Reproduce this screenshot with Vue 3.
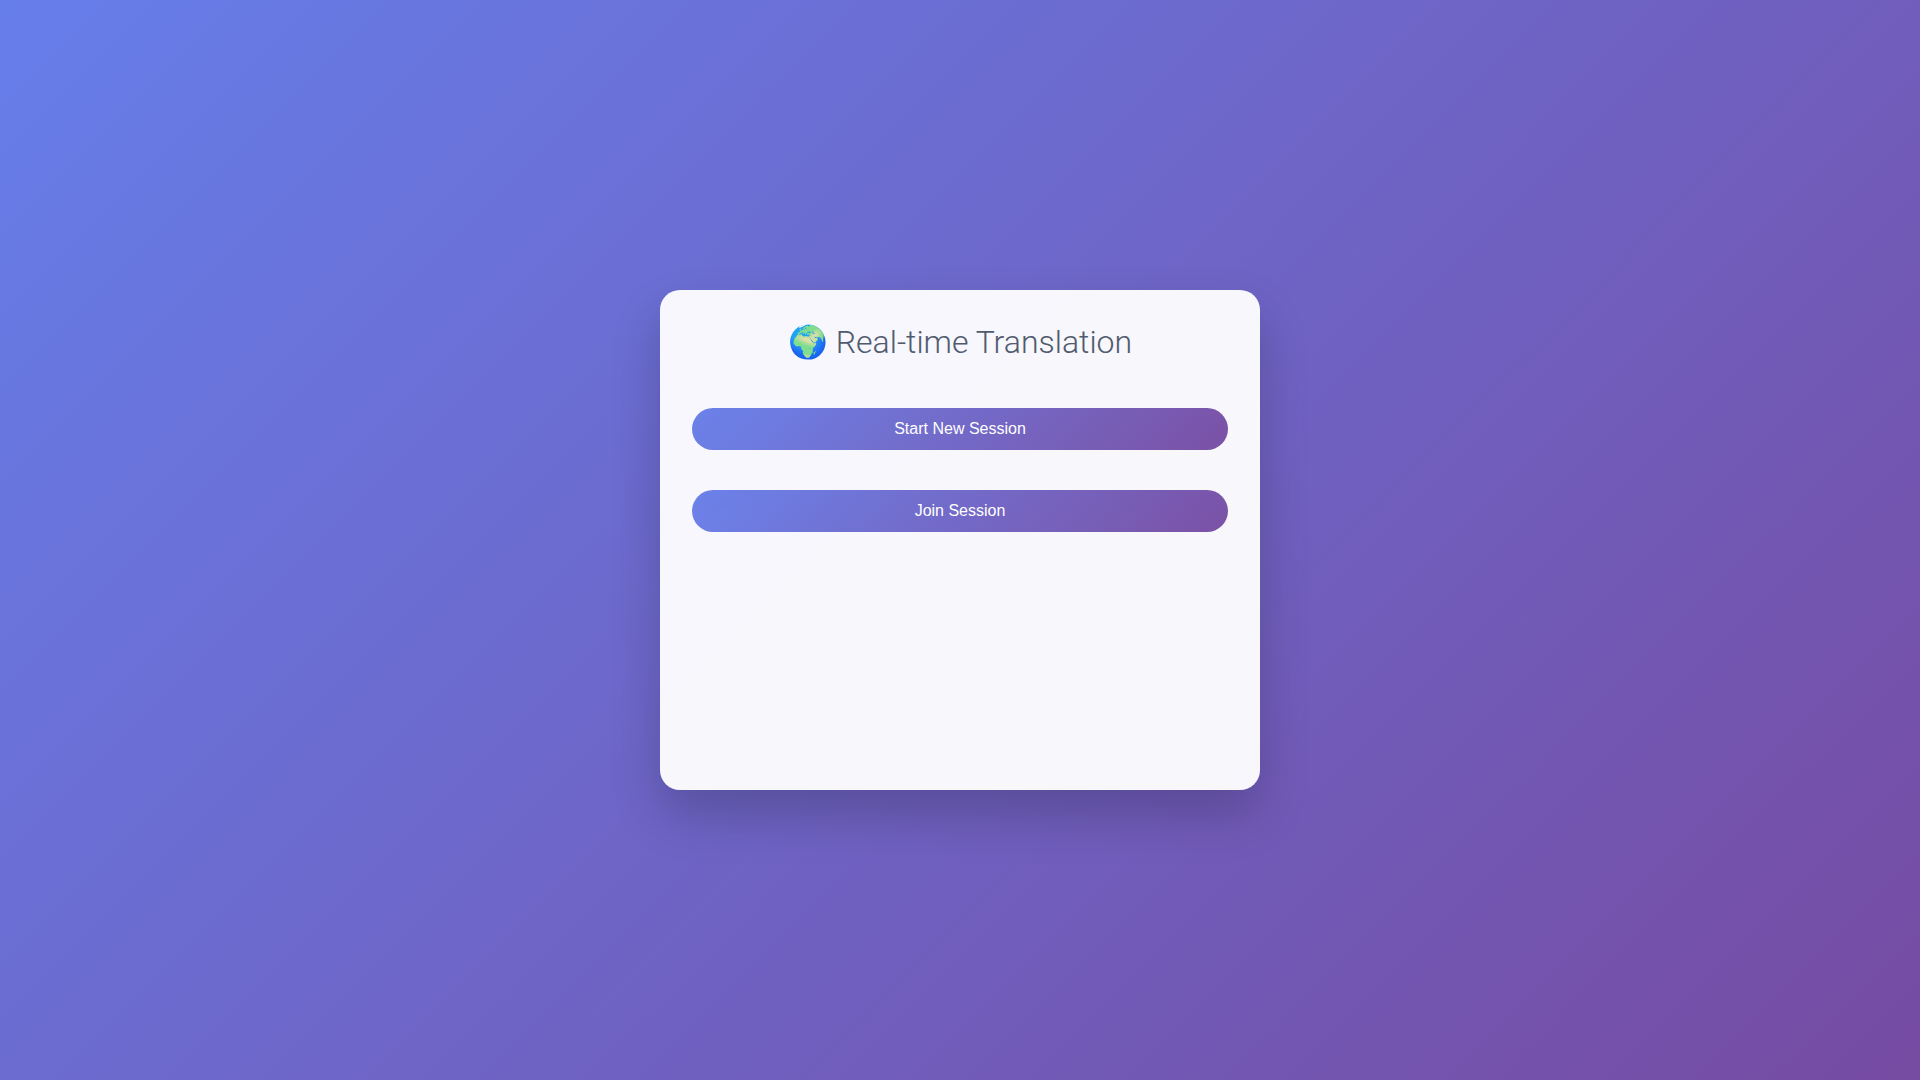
<script setup>
</script>

<template>
  <main class="page">
    <section class="card">
      <div class="content">
        <h1 class="title">🌍 Real-time Translation</h1>
        <div class="actions">
          <button type="button" class="action">Start New Session</button>
          <button type="button" class="action">Join Session</button>
        </div>
      </div>
    </section>
  </main>
</template>

<style>
body {
  margin: 0;
}
</style>

<style scoped>
.page {
  box-sizing: border-box;
  min-height: 100vh;
  display: flex;
  align-items: center;
  justify-content: center;
  background: linear-gradient(135deg, #667eea 0%, #764ba2 100%);
  font-family: Roboto, sans-serif;
}

.card {
  box-sizing: border-box;
  width: 100%;
  max-width: 600px;
  min-height: 500px;
  padding: 32px;
  border-radius: 20px;
  background: rgba(255, 255, 255, 0.95);
  box-shadow: 0 25px 50px rgba(0, 0, 0, 0.2);
}

.content {
  opacity: 0.96;
}

.title {
  margin: 0 0 46px;
  color: #4a5568;
  font-size: 32px;
  font-weight: 300;
  line-height: 40px;
  text-align: center;
}

.actions {
  display: flex;
  flex-direction: column;
  gap: 40px;
}

.action {
  width: 100%;
  padding: 12px 24px;
  border: none;
  border-radius: 25px;
  background: linear-gradient(135deg, #667eea 0%, #764ba2 100%);
  color: #fff;
  font-family: "Liberation Sans", Arial, sans-serif;
  font-size: 16px;
  line-height: 18px;
  cursor: pointer;
}
</style>
